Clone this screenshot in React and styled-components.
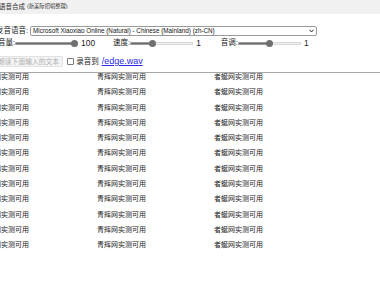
import React from "react";
import styled, { createGlobalStyle } from "styled-components";

const GlobalStyle = createGlobalStyle`
  html, body {
    margin: 0;
    padding: 0;
    background: #fff;
    overflow: hidden;
  }
  body {
    font-family: "Liberation Sans", "Noto Sans CJK SC", sans-serif;
    font-size: 8px;
    line-height: 1;
    color: #222;
  }
`;

const Page = styled.div`
  width: 400px;
  margin-left: -4px;
`;

const TitleBar = styled.div`
  height: 14px;
  background: #f1f1f1;
  display: flex;
  align-items: center;
  padding-left: 3px;
  gap: 2px;
`;

const Title = styled.span`
  font-size: 6.5px;
  color: #333;
`;

const SubTitle = styled.span`
  font-size: 5.3px;
  color: #333;
`;

const Row = styled.div`
  display: flex;
  align-items: center;
  height: ${(p) => p.$h || 10}px;
  margin-top: ${(p) => p.$top || 0}px;
  padding-left: ${(p) => p.$pad || 0}px;
`;

const Label = styled.span`
  font-size: 7.5px;
  line-height: 10px;
  white-space: nowrap;
  color: #222;
`;

const SelectBox = styled.div`
  position: relative;
  width: 287px;
  height: 10px;
  margin-left: 2px;
`;

const Select = styled.select`
  display: block;
  appearance: none;
  -webkit-appearance: none;
  width: 100%;
  height: 10px;
  box-sizing: border-box;
  border: 1px solid #9a9a9a;
  border-radius: 2px;
  background: #fff;
  font-family: "Liberation Sans", sans-serif;
  font-size: 6.3px;
  line-height: 8px;
  padding: 0 0 0 2px;
  margin: 0;
  color: #111;
  outline: none;
`;

const Chevron = styled.svg`
  position: absolute;
  right: 3px;
  top: 3px;
  width: 5px;
  height: 4px;
  pointer-events: none;
`;

const Group = styled.div`
  display: flex;
  align-items: center;
  margin-right: ${(p) => p.$mr || 0}px;
`;

const Range = styled.input.attrs({ type: "range" })`
  display: block;
  -webkit-appearance: none;
  appearance: none;
  width: 63px;
  height: 7px;
  margin: 0;
  padding: 0;
  background: transparent;

  &::-webkit-slider-runnable-track {
    height: 3px;
    border-radius: 2px;
    background: linear-gradient(
      to right,
      #6f6f6f calc(3.5px + ${(p) => p.$frac * 56}px),
      #efefef calc(3.5px + ${(p) => p.$frac * 56}px)
    );
    box-shadow: inset 0 0 0 0.6px #c4c4c4;
  }
  &::-webkit-slider-thumb {
    -webkit-appearance: none;
    width: 7px;
    height: 7px;
    border-radius: 50%;
    background: #6f6f6f;
    margin-top: -2px;
    border: none;
  }
`;

const Value = styled.span`
  font-size: 8.4px;
  line-height: 10px;
  margin-left: 3px;
  color: #222;
`;

const Button = styled.button`
  display: block;
  height: 11px;
  box-sizing: border-box;
  padding: 0 3px;
  margin: 0 0 0 -2px;
  border: 1px solid #e2e2e2;
  border-radius: 1px;
  background: #f4f4f4;
  color: #b0b0b0;
  font-family: "Noto Sans CJK SC", sans-serif;
  font-size: 6.8px;
  line-height: 9px;
  white-space: nowrap;
`;

const Check = styled.span`
  display: block;
  width: 7px;
  height: 7px;
  box-sizing: border-box;
  border: 1px solid #777;
  border-radius: 1px;
  margin: 0 2px 0 4px;
`;

const Link = styled.a`
  font-size: 9px;
  line-height: 11px;
  color: #2a2ae6;
  text-decoration: underline;
  margin-left: 3px;
`;

const Divider = styled.div`
  height: 1px;
  background: #a8a8a8;
  margin-top: 5px;
`;

const List = styled.div`
  margin-left: -16px;
`;

const ListRow = styled.div`
  display: grid;
  grid-template-columns: 117px 117px 117px;
  height: 15.3px;
  font-size: 7px;
  line-height: 7px;
  color: #222;
`;

const rows = Array.from({ length: 12 });

export default function App() {
  return (
    <>
      <GlobalStyle />
      <Page>
        <TitleBar>
          <Title>语音合成</Title>
          <SubTitle>(新美际招唱整理)</SubTitle>
        </TitleBar>

        <Row $top={12}>
          <Label>发音语音:</Label>
          <SelectBox>
            <Select defaultValue="xiaoxiao">
              <option value="xiaoxiao">
                Microsoft Xiaoxiao Online (Natural) - Chinese (Mainland) (zh-CN)
              </option>
            </Select>
            <Chevron viewBox="0 0 10 8">
              <path d="M1 1.5 L5 6 L9 1.5" fill="none" stroke="#222" strokeWidth="2" />
            </Chevron>
          </SelectBox>
        </Row>

        <Row $top={2} $pad={2}>
          <Group $mr={18}>
            <Label>音量:</Label>
            <Range min={0} max={100} defaultValue={100} $frac={1} />
            <Value>100</Value>
          </Group>
          <Group $mr={20}>
            <Label>速度:</Label>
            <Range min={0} max={3} step={0.1} defaultValue={1} $frac={1 / 3} />
            <Value>1</Value>
          </Group>
          <Group>
            <Label>音调:</Label>
            <Range min={0} max={2} step={0.1} defaultValue={1} $frac={0.5} />
            <Value>1</Value>
          </Group>
        </Row>

        <Row $top={8} $h={11}>
          <Button disabled>朗读下面输入的文本</Button>
          <Check />
          <Label>录音到</Label>
          <Link href="#">/edge.wav</Link>
        </Row>

        <Divider />

        <List>
          {rows.map((_, i) => (
            <ListRow key={i}>
              <span>腾讯网实测可用</span>
              <span>青辉网实测可用</span>
              <span>者蜒网实测可用</span>
            </ListRow>
          ))}
        </List>
      </Page>
    </>
  );
}
